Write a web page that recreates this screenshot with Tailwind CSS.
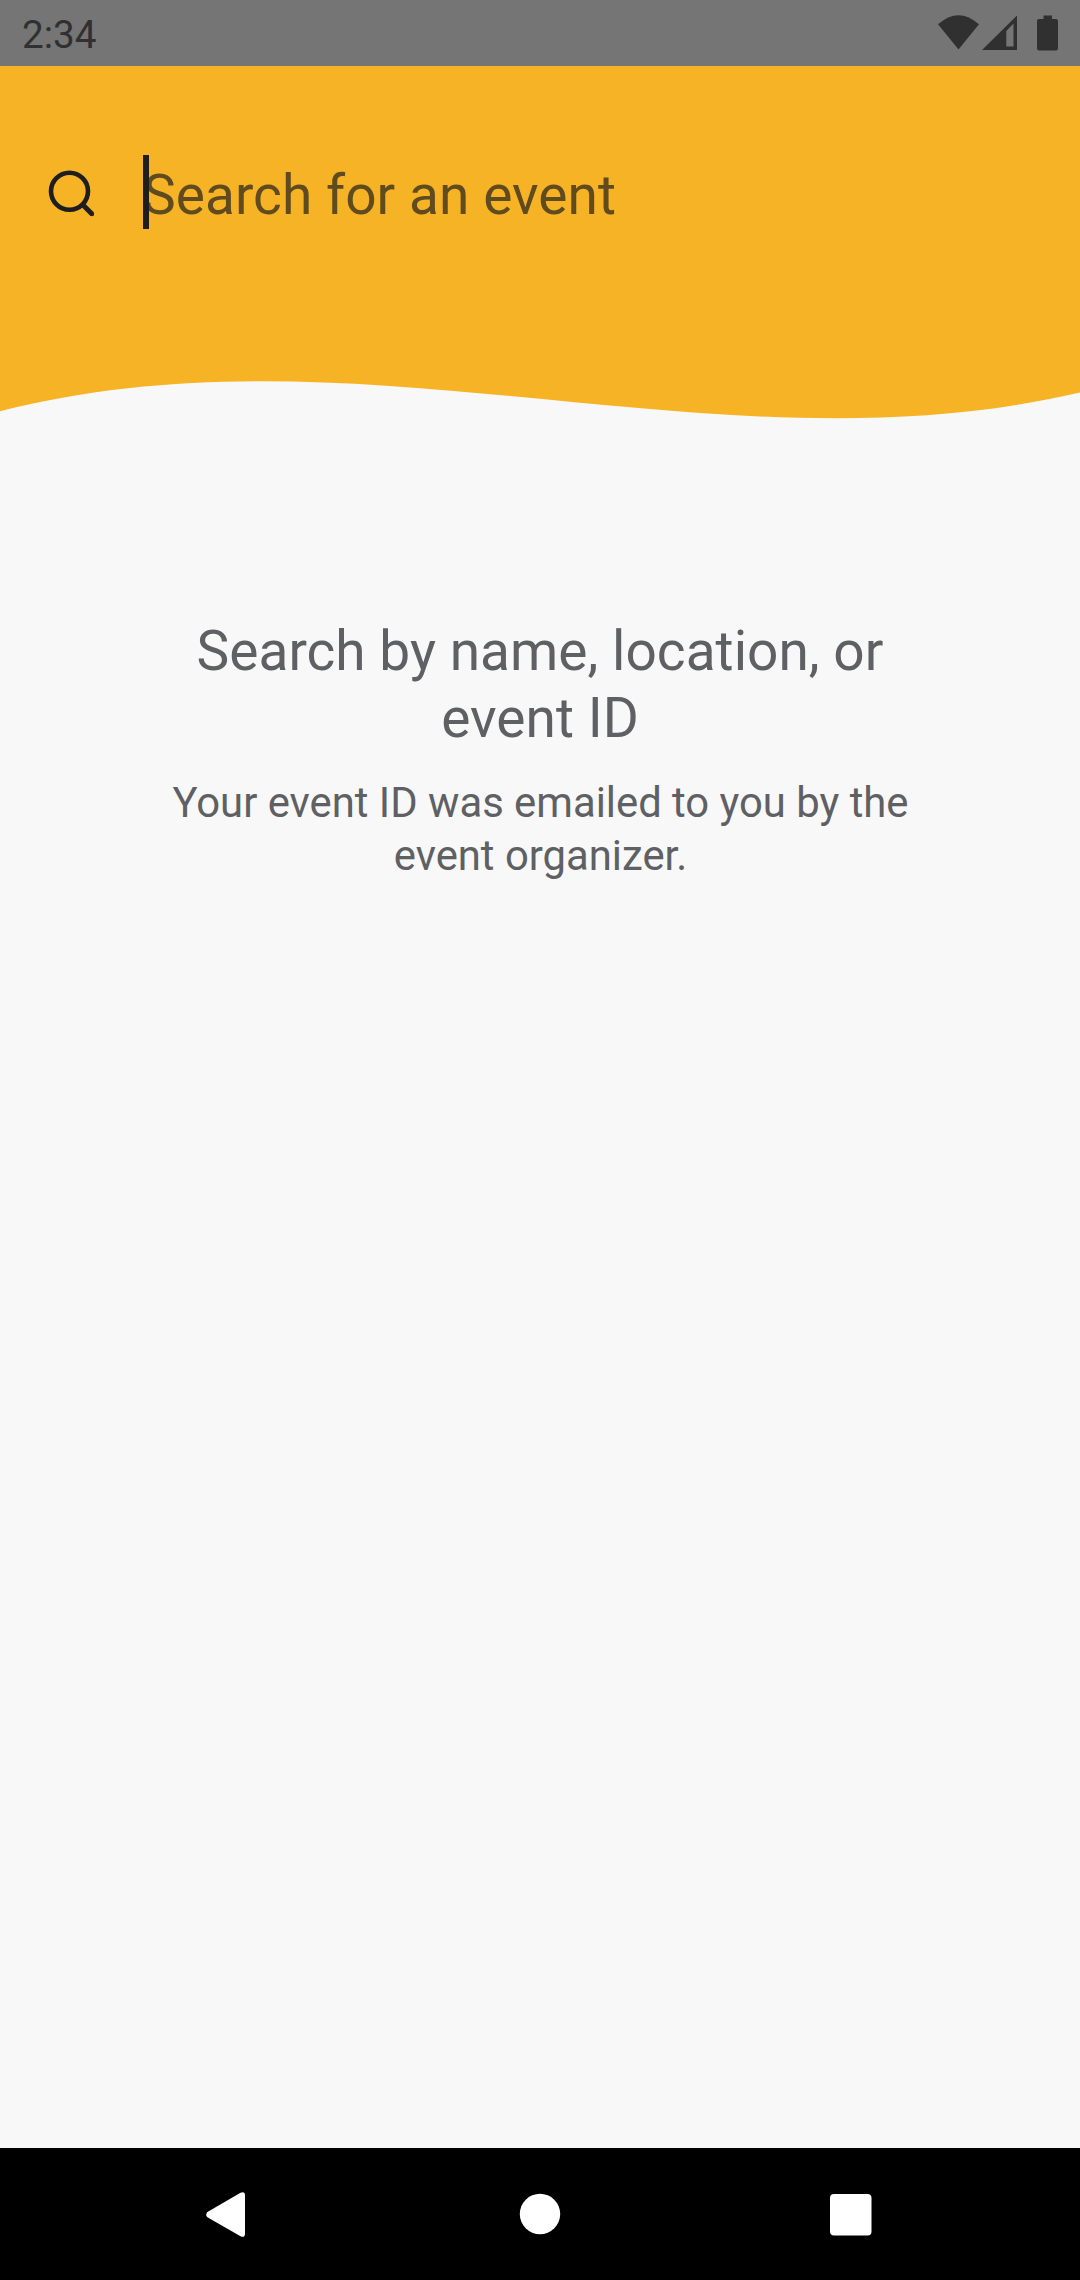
<!DOCTYPE html>
<html lang="en">
<head>
<meta charset="utf-8">
<title>Search for an event</title>
<script src="https://cdn.jsdelivr.net/npm/@tailwindcss/browser@4"></script>
</head>
<body class="bg-[#f8f8f8]">
<div class="flex h-[2280px] w-[1080px] flex-col overflow-hidden bg-[#f8f8f8] font-['Roboto',sans-serif]">
  <!-- Status bar -->
  <header class="flex h-[66px] shrink-0 justify-between bg-[#757575] pl-[22px] text-[#303030]">
    <span class="pt-[11px] text-[38.7px] leading-[47px]">2:34</span>
    <svg class="h-[66px] w-40" viewBox="0 0 160 66" fill="currentColor">
      <path d="M18 24.300Q38.500 6 59 24.300L38.500 49.500Z"/>
      <path fill-rule="evenodd" d="M62 50L97 15.500V50ZM86.300 31V46.500H93.500V23.500Z"/>
      <path d="M123.500 15.500H132V19H136Q138 19 138 21V48.500Q138 50.500 136 50.500H119Q117 50.500 117 48.500V21Q117 19 119 19H123.500Z"/>
    </svg>
  </header>
  <!-- Search header -->
  <div class="flex h-[258px] shrink-0 bg-[#f7b326] pt-[81px]">
    <svg class="ml-[45px] mt-[20px] h-[50px] w-[54px]" viewBox="0 0 54 50" fill="none" stroke="#1e1e1e" stroke-width="4.600">
      <circle cx="24.500" cy="24.300" r="18.500"/>
      <path d="M36.800 36.800L47 47" stroke-width="5"/>
      <circle cx="46.900" cy="47" r="1" stroke-width="2.500"/>
    </svg>
    <div class="relative ml-[44px] h-[89px] flex-1">
      <div class="pt-[7px] text-[55px] leading-[82px] tracking-[0.06px] text-[#604b1e]">Search for an event</div>
      <div class="absolute left-0 top-[8px] h-[74px] w-[6px] bg-[#1e1e1e]"></div>
    </div>
  </div>
  <svg class="h-24 w-full shrink-0" viewBox="0 324 1080 96" fill="#f7b326">
    <path d="M0 323V411.300C360 319 720 476.800 1080 392.600V323Z"/>
  </svg>
  <!-- Empty state -->
  <main class="flex flex-1 flex-col items-center pt-[198px] text-center text-[#5f6063]">
    <h1 class="text-[55px] leading-[67px] tracking-[0.03px]">Search by name, location, or<br>event ID</h1>
    <p class="mt-6 pl-px text-[41.8px] leading-[53px]">Your event ID was emailed to you by the<br>event organizer.</p>
  </main>
  <!-- Navigation bar -->
  <nav class="h-[132px] shrink-0 bg-black">
    <svg class="h-[132px] w-[1080px]" viewBox="0 0 1080 132" fill="#fff">
      <path d="M207 64.300L240.500 44.700Q244.900 43 245 47V86Q244.900 90 240.500 88.300L207 69Q205.500 66.500 207 64.300Z"/>
      <circle cx="540" cy="66" r="20.200"/>
      <rect x="830" y="46" width="41.500" height="41.500" rx="4"/>
    </svg>
  </nav>
</div>
</body>
</html>
